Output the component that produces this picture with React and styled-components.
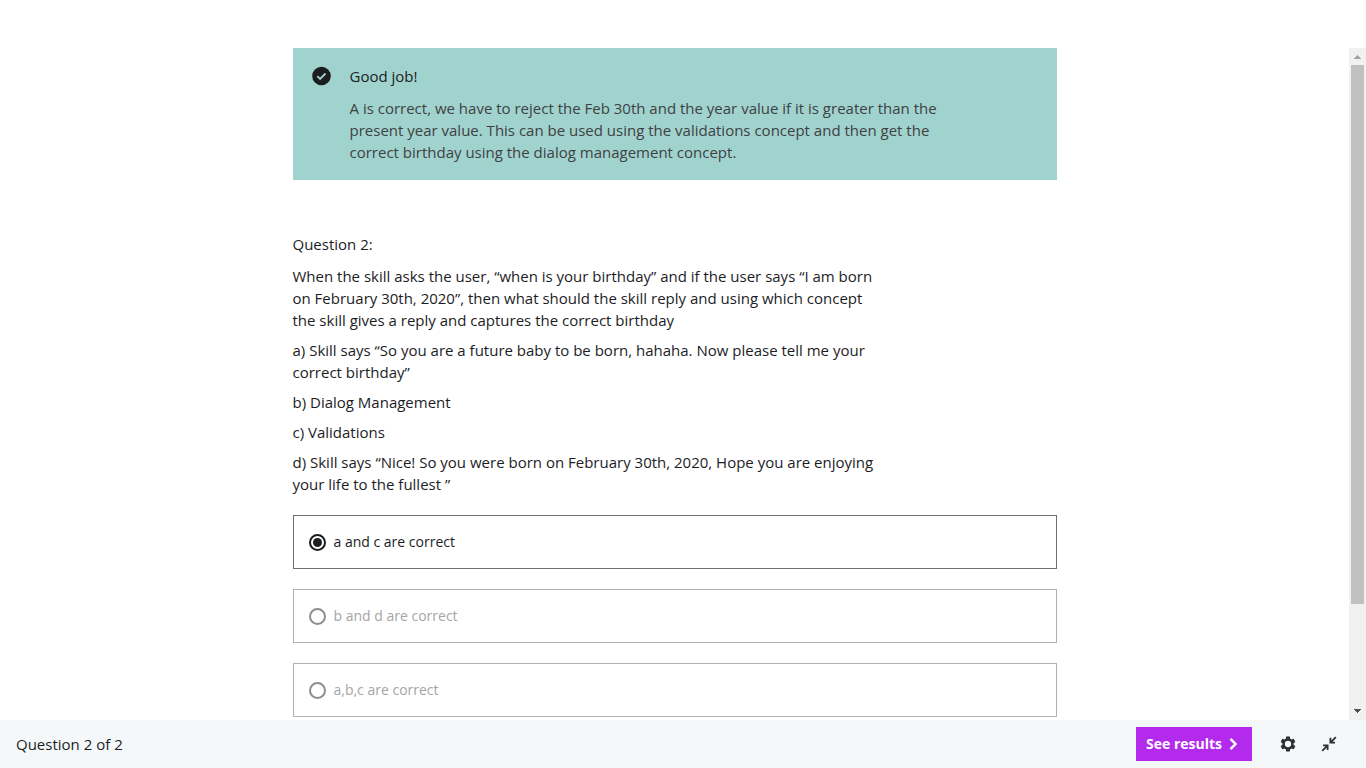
import React from "react";
import styled, { createGlobalStyle } from "styled-components";

const GlobalStyle = createGlobalStyle`
  *, *::before, *::after { box-sizing: border-box; }
  body {
    margin: 0;
    background: #fff;
    color: #1c1d1f;
    font-family: "Open Sans", "Noto Sans", sans-serif;
    font-size: 15px;
    line-height: 22px;
  }
  p, h1, h2, fieldset { margin: 0; padding: 0; border: 0; font: inherit; }
`;

const Page = styled.div`
  display: flex;
  flex-direction: column;
  height: 100vh;
  padding-top: 48px;
`;

const Body = styled.div`
  display: flex;
  flex: 1;
  min-height: 0;
`;

const ScrollArea = styled.main`
  flex: 1;
  min-width: 0;
  overflow-y: auto;
  scrollbar-width: none;
`;

const Content = styled.div`
  max-width: 764px;
  margin: 0 auto;
  padding-bottom: 126px;
`;

const Banner = styled.section`
  display: flex;
  gap: 19px;
  padding: 17px 19px;
  background: #a1d3ce;
`;

const BannerIcon = styled.svg`
  flex: none;
  width: 19px;
  height: 22px;
`;

const BannerText = styled.div`
  display: flex;
  flex-direction: column;
  gap: 10px;
  max-width: 594px;
`;

const Explanation = styled.p`
  color: #3e4143;
`;

const Question = styled.section`
  display: flex;
  flex-direction: column;
  gap: 8px;
  max-width: 594px;
  padding: 53px 0 20px;
`;

const QuestionTitle = styled.h2`
  margin-bottom: 2px;
`;

const Options = styled.fieldset`
  display: flex;
  flex-direction: column;
  gap: 20px;
`;

const Option = styled.label`
  display: flex;
  align-items: center;
  gap: 8px;
  height: 54px;
  padding: 0 15px;
  border: 1px solid ${(p) => (p.$muted ? "#b0b1b4" : "#6a6f73")};
  color: ${(p) => (p.$muted ? "#a5a5a6" : "#1c1d1f")};
  font-size: 14px;
`;

const Radio = styled.input`
  appearance: none;
  display: grid;
  place-items: center;
  flex: none;
  width: 17px;
  height: 17px;
  margin: 0;
  border: 2px solid #1c1d1f;
  border-radius: 50%;

  &:checked::before {
    content: "";
    width: 9px;
    height: 9px;
    border-radius: 50%;
    background: #1c1d1f;
  }
  &:disabled { border-color: #8d8e8f; }
`;

const ScrollBar = styled.div`
  display: flex;
  flex-direction: column;
  flex: none;
  width: 17px;
  background: #f1f1f1;
`;

const ScrollArrow = styled.svg`
  flex: none;
  width: 17px;
  height: 17px;
`;

const ScrollTrack = styled.div`
  flex: 1;
  padding: 0 2px;
`;

const ScrollThumb = styled.div`
  height: 84.5%;
  background: #c1c1c1;
`;

const Footer = styled.footer`
  display: flex;
  align-items: center;
  flex: none;
  height: 48px;
  padding: 0 17px 0 16px;
  background: #f5f8f9;
`;

const Progress = styled.span`
  flex: 1;
`;

const ResultsButton = styled.button`
  display: flex;
  align-items: center;
  justify-content: space-between;
  width: 116px;
  height: 34px;
  margin-right: 15px;
  padding: 0 12px 0 10px;
  border: 0;
  background: #b42aed;
  color: #fff;
  font: 700 14px/22px "Open Sans", "Noto Sans", sans-serif;
  white-space: nowrap;
`;

const IconButton = styled.button`
  display: flex;
  align-items: center;
  justify-content: center;
  width: 41px;
  height: 34px;
  padding: 0;
  border: 0;
  background: none;
  color: #2d2f31;
`;

const paragraphs = [
  "When the skill asks the user, “when is your birthday” and if the user says “I am born on February 30th, 2020”, then what should the skill reply and using which concept the skill gives a reply and captures the correct birthday",
  "a) Skill says “So you are a future baby to be born, hahaha. Now please tell me your correct birthday”",
  "b) Dialog Management",
  "c) Validations",
  "d) Skill says “Nice! So you were born on February 30th, 2020, Hope you are enjoying your life to the fullest ”",
];

const options = [
  { label: "a and c are correct", chosen: true },
  { label: "b and d are correct", chosen: false },
  { label: "a,b,c are correct", chosen: false },
];

export default function App() {
  return (
    <>
      <GlobalStyle />
      <Page>
        <Body>
          <ScrollArea>
            <Content>
              <Banner>
                <BannerIcon viewBox="0 0 19 22" aria-hidden="true">
                  <circle cx="9.5" cy="11" r="9.3" fill="#1c1d1f" />
                  <path d="M5.3 11.2l2.8 2.7 5.4-5.4" fill="none" stroke="#a1d3ce" strokeWidth="1.8" />
                </BannerIcon>
                <BannerText>
                  <h1>Good job!</h1>
                  <Explanation>
                    A is correct, we have to reject the Feb 30th and the year value if it is greater than the present year value. This can be used using the validations concept and then get the correct birthday using the dialog management concept.
                  </Explanation>
                </BannerText>
              </Banner>
              <Question>
                <QuestionTitle>Question 2:</QuestionTitle>
                {paragraphs.map((text) => (
                  <p key={text}>{text}</p>
                ))}
              </Question>
              <Options>
                {options.map(({ label, chosen }) => (
                  <Option key={label} $muted={!chosen}>
                    <Radio type="radio" name="answer" defaultChecked={chosen} disabled={!chosen} />
                    {label}
                  </Option>
                ))}
              </Options>
            </Content>
          </ScrollArea>
          <ScrollBar aria-hidden="true">
            <ScrollArrow viewBox="0 0 17 17" shapeRendering="crispEdges">
              <path d="M8 7h1v1h1v1h1v1h1v1H5v-1h1V9h1V8h1z" fill="#a3a3a3" />
            </ScrollArrow>
            <ScrollTrack>
              <ScrollThumb />
            </ScrollTrack>
            <ScrollArrow viewBox="0 0 17 17" shapeRendering="crispEdges">
              <path d="M5 6h7v1h-1v1h-1v1H9v1H8V9H7V8H6V7H5z" fill="#505050" />
            </ScrollArrow>
          </ScrollBar>
        </Body>
        <Footer>
          <Progress>Question 2 of 2</Progress>
          <ResultsButton type="button">
            See results
            <svg width="14" height="14" viewBox="0 0 14 14" aria-hidden="true">
              <path d="M4.500 1.800l5 5.200-5 5.200" fill="none" stroke="#fff" strokeWidth="2.500" />
            </svg>
          </ResultsButton>
          <IconButton type="button" aria-label="Settings">
            <svg width="18" height="18" viewBox="0 0 24 24" fill="currentColor" aria-hidden="true">
              <path d="M19.43 12.98c.04-.32.07-.64.07-.98 0-.34-.03-.66-.07-.98l2.11-1.65c.19-.15.24-.42.12-.64l-2-3.46c-.09-.16-.26-.25-.44-.25-.06 0-.12.01-.17.03l-2.49 1c-.52-.4-1.08-.73-1.69-.98l-.38-2.65C14.46 2.18 14.25 2 14 2h-4c-.25 0-.46.18-.49.42l-.38 2.65c-.61.25-1.17.59-1.69.98l-2.49-1c-.06-.02-.12-.03-.18-.03-.17 0-.34.09-.43.25l-2 3.46c-.13.22-.07.49.12.64l2.11 1.65c-.04.32-.07.65-.07.98 0 .33.03.66.07.98l-2.11 1.65c-.19.15-.24.42-.12.64l2 3.46c.09.16.26.25.44.25.06 0 .12-.01.17-.03l2.49-1c.52.4 1.08.73 1.69.98l.38 2.65c.03.24.24.42.49.42h4c.25 0 .46-.18.49-.42l.38-2.65c.61-.25 1.17-.59 1.69-.98l2.49 1c.06.02.12.03.18.03.17 0 .34-.09.43-.25l2-3.46c.12-.22.07-.49-.12-.64l-2.11-1.65zM12 16.200a4.200 4.200 0 1 1 0-8.400 4.200 4.200 0 0 1 0 8.400z" />
            </svg>
          </IconButton>
          <IconButton type="button" aria-label="Exit expanded view">
            <svg width="16" height="16" viewBox="0 0 16 16" fill="none" stroke="currentColor" strokeWidth="1.800" aria-hidden="true">
              <path d="M9.400 1.800v4.800h4.600M9.600 6.400L14.900 1.200M2.100 9.400h4.500v4.600M6.400 9.600L1.200 14.800" />
            </svg>
          </IconButton>
        </Footer>
      </Page>
    </>
  );
}
